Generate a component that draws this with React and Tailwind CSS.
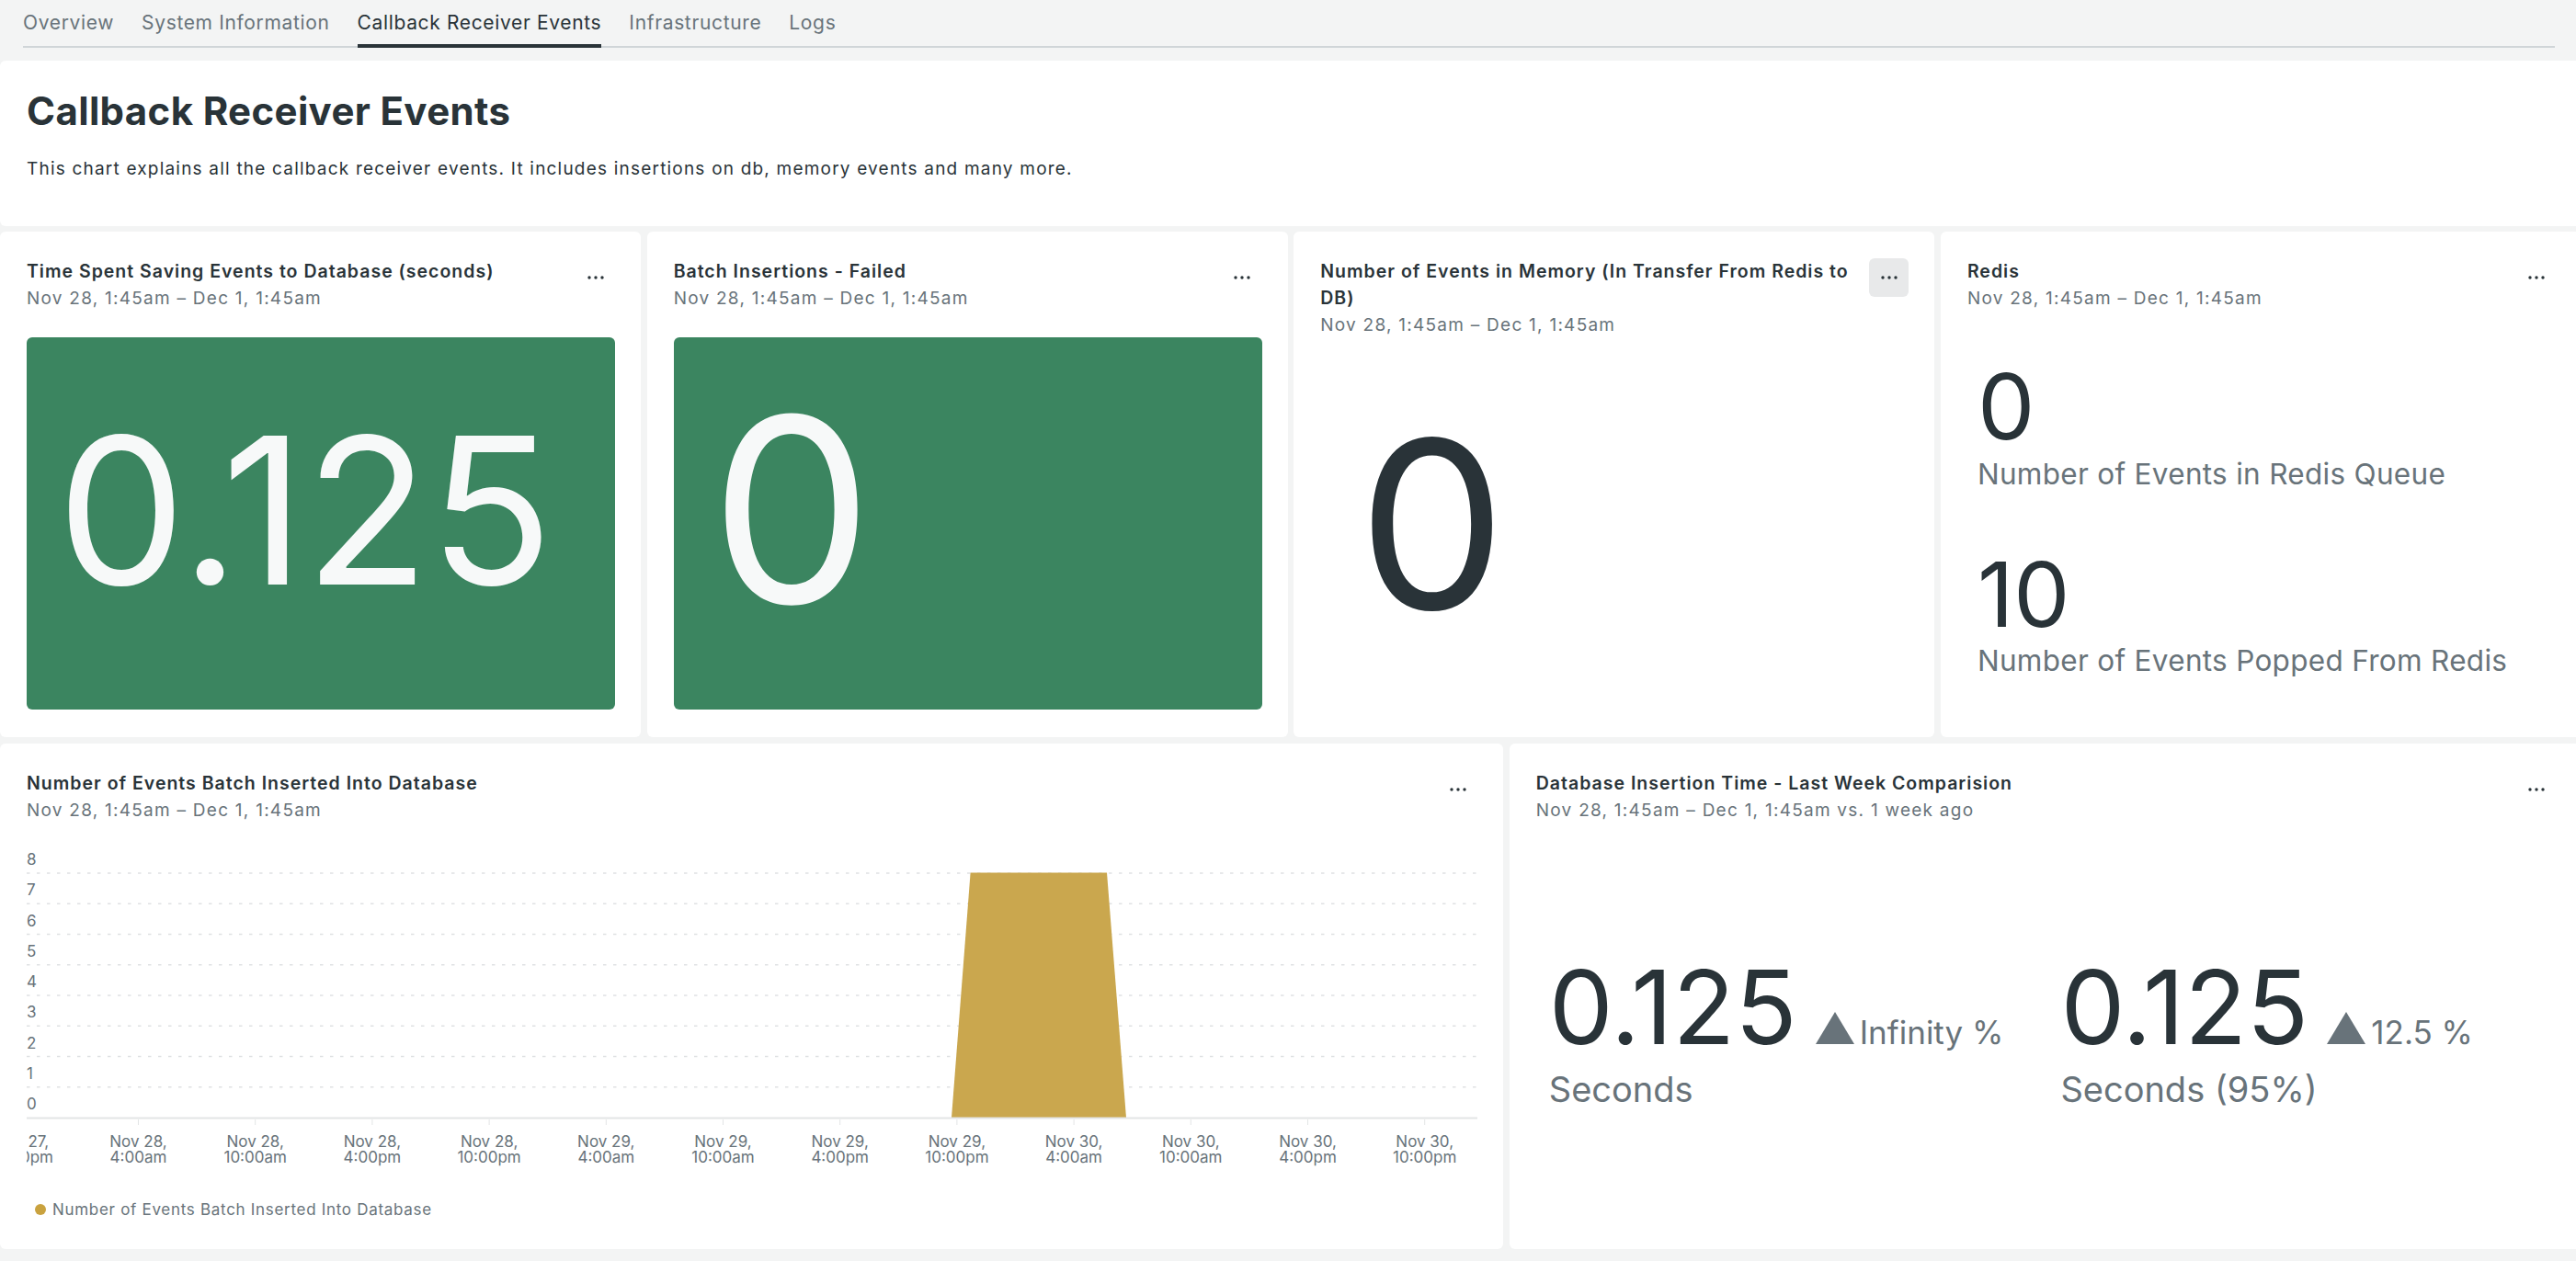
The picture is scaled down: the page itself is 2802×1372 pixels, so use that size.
import React from 'react';

const tabs = ['Overview', 'System Information', 'Callback Receiver Events', 'Infrastructure', 'Logs'];

const ticks = [
  ['Nov 27,', '10:00pm'],
  ['Nov 28,', '4:00am'],
  ['Nov 28,', '10:00am'],
  ['Nov 28,', '4:00pm'],
  ['Nov 28,', '10:00pm'],
  ['Nov 29,', '4:00am'],
  ['Nov 29,', '10:00am'],
  ['Nov 29,', '4:00pm'],
  ['Nov 29,', '10:00pm'],
  ['Nov 30,', '4:00am'],
  ['Nov 30,', '10:00am'],
  ['Nov 30,', '4:00pm'],
  ['Nov 30,', '10:00pm'],
];

const RANGE = 'Nov 28, 1:45am – Dec 1, 1:45am';

function Dots() {
  return (
    <svg width="18" height="4" viewBox="0 0 18 4">
      <circle cx="2" cy="2" r="1.7" fill="#293338" />
      <circle cx="9" cy="2" r="1.7" fill="#293338" />
      <circle cx="16" cy="2" r="1.7" fill="#293338" />
    </svg>
  );
}

function CardHeader({ title, date, hover }) {
  return (
    <div className="flex items-start justify-between gap-[12px] pl-[29px] pr-[28px] pt-[29px]">
      <div className="min-w-0">
        <div className="text-[19.5px] font-semibold leading-[29px] tracking-[1px] text-[#293338]">{title}</div>
        <div className="text-[19px] leading-[29px] tracking-[1.25px] text-[#68737a]">{date}</div>
      </div>
      <div
        className={
          hover
            ? 'flex h-[42px] w-[43px] shrink-0 items-center justify-center rounded-[6px] bg-[#e8e9ea]'
            : 'flex h-[42px] w-[43px] shrink-0 items-center justify-center rounded-[6px]'
        }
      >
        <Dots />
      </div>
    </div>
  );
}

function Triangle() {
  return (
    <svg width="42" height="35" viewBox="0 0 42 35" className="ml-[20px] shrink-0">
      <polygon points="21,0 42,35 0,35" fill="#68737a" />
    </svg>
  );
}

function Compare({ value, delta, label }) {
  return (
    <div>
      <div className="flex items-baseline">
        <span className="text-[111px] leading-none text-[#293338]">{value}</span>
        <Triangle />
        <span className="ml-[6px] text-[35px] text-[#68737a]">{delta}</span>
      </div>
      <div className="mt-[12px] text-[38px] leading-[1.2] text-[#68737a]">{label}</div>
    </div>
  );
}

function Chart() {
  const gy = (v) => 29 + (8 - v) * 33.25;
  return (
    <svg width="1578" height="355" className="ml-[29px] mt-[25px] block">
      {[1, 2, 3, 4, 5, 6, 7, 8].map((v) => (
        <line
          key={v}
          x1="0"
          x2="1578"
          y1={gy(v)}
          y2={gy(v)}
          stroke="#dfe1e3"
          strokeWidth="1.5"
          strokeDasharray="3.5 7.5"
        />
      ))}
      <polygon points="1006,295 1026.6,28.5 1175,28.5 1196,295" fill="#caa74e" />
      <line x1="0" x2="1578" y1="295.5" y2="295.5" stroke="#e3e5e6" strokeWidth="2" />
      {ticks.map((t, i) => {
        const x = -5.7 + 127.2 * i;
        return (
          <g key={i} fontFamily="Inter, sans-serif" fontSize="17" fill="#68737a" textAnchor="middle">
            <line x1={x} x2={x} y1="297" y2="303" stroke="#e3e5e6" strokeWidth="1" />
            <text x={x} y="327">{t[0]}</text>
            <text x={x} y="344">{t[1]}</text>
          </g>
        );
      })}
      {[0, 1, 2, 3, 4, 5, 6, 7, 8].map((v) => (
        <text key={v} x="0" y={gy(v) - 9} fontFamily="Inter, sans-serif" fontSize="17" fill="#68737a">
          {v}
        </text>
      ))}
    </svg>
  );
}

export default function App() {
  return (
    <div className="h-[1372px] w-[2802px] overflow-hidden bg-[#f3f4f4] font-['Inter',sans-serif]">
      {/* Tabs */}
      <div className="ml-[25px] mr-[23px] flex items-start gap-[30px] border-b-2 border-[#d0d5d8]">
        {tabs.map((t) => (
          <div
            key={t}
            className={
              t === 'Callback Receiver Events'
                ? 'mb-[-2px] border-b-4 border-[#293338] pb-[8px] pt-[10px] text-[21px] leading-[30px] tracking-[0.65px] text-[#293338]'
                : 'pb-[8px] pt-[10px] text-[21px] leading-[30px] tracking-[0.65px] text-[#68737a]'
            }
          >
            {t}
          </div>
        ))}
      </div>

      <div className="mt-[14px] w-[2808px]">
        {/* Page header */}
        <div className="h-[180px] rounded-[6px] bg-white pl-[29px] pt-[30px]">
          <h1 className="text-[42px] font-bold leading-[50px] tracking-[0.35px] text-[#293338]">
            Callback Receiver Events
          </h1>
          <p className="mt-[24px] text-[19px] leading-[28px] tracking-[1.2px] text-[#293338]">
            This chart explains all the callback receiver events. It includes insertions on db, memory events and many
            more.
          </p>
        </div>

        <div className="mt-[6px] grid grid-cols-12 grid-rows-[550px_550px] gap-[6.5px]">
          {/* Time spent */}
          <div className="col-span-3 flex flex-col rounded-[6px] bg-white">
            <CardHeader title="Time Spent Saving Events to Database (seconds)" date={RANGE} />
            <div className="mb-[30px] ml-[29px] mr-[28px] mt-[28px] flex flex-1 items-center rounded-[6px] bg-[#3b8560] pb-[28px] pl-[33px]">
              <span className="text-[222px] leading-none text-[#f7f9f9]">0.125</span>
            </div>
          </div>

          {/* Batch failed */}
          <div className="col-span-3 flex flex-col rounded-[6px] bg-white">
            <CardHeader title="Batch Insertions - Failed" date={RANGE} />
            <div className="mb-[30px] ml-[29px] mr-[28px] mt-[28px] flex flex-1 items-center rounded-[6px] bg-[#3b8560] pb-[30px] pl-[40px]">
              <span className="text-[280px] leading-none text-[#f7f9f9]">0</span>
            </div>
          </div>

          {/* In memory */}
          <div className="col-span-3 flex flex-col rounded-[6px] bg-white">
            <CardHeader title="Number of Events in Memory (In Transfer From Redis to DB)" date={RANGE} hover />
            <div className="mb-[30px] flex flex-1 items-center pl-[70px]">
              <span className="text-[255px] leading-none text-[#293338]">0</span>
            </div>
          </div>

          {/* Redis */}
          <div className="col-span-3 flex flex-col rounded-[6px] bg-white">
            <CardHeader title="Redis" date={RANGE} />
            <div className="flex flex-1 flex-col justify-center pb-[11px] pl-[40px]">
              <div className="text-[99px] leading-none text-[#293338]">0</div>
              <div className="mt-[5px] text-[31.5px] leading-[1.2] tracking-[0.3px] text-[#68737a]">
                Number of Events in Redis Queue
              </div>
              <div className="mt-[63px] text-[97px] leading-none text-[#293338]">10</div>
              <div className="mt-[5px] text-[31.5px] leading-[1.2] tracking-[0.3px] text-[#68737a]">
                Number of Events Popped From Redis
              </div>
            </div>
          </div>

          {/* Batch inserted chart */}
          <div className="col-span-7 flex flex-col rounded-[6px] bg-white">
            <CardHeader title="Number of Events Batch Inserted Into Database" date={RANGE} />
            <Chart />
            <div className="ml-[38px] mt-[28px] flex items-center gap-[7px] text-[17px] leading-[24px] tracking-[0.7px] text-[#68737a]">
              <span className="h-[12px] w-[12px] rounded-full bg-[#c9a23f]" />
              Number of Events Batch Inserted Into Database
            </div>
          </div>

          {/* Comparison */}
          <div className="col-span-5 flex flex-col rounded-[6px] bg-white">
            <CardHeader
              title="Database Insertion Time - Last Week Comparision"
              date="Nov 28, 1:45am – Dec 1, 1:45am vs. 1 week ago"
            />
            <div className="flex flex-1 items-center gap-[62px] pb-[5px] pl-[43px]">
              <Compare value="0.125" delta="Infinity %" label="Seconds" />
              <Compare value="0.125" delta="12.5 %" label="Seconds (95%)" />
            </div>
          </div>
        </div>
      </div>
    </div>
  );
}
